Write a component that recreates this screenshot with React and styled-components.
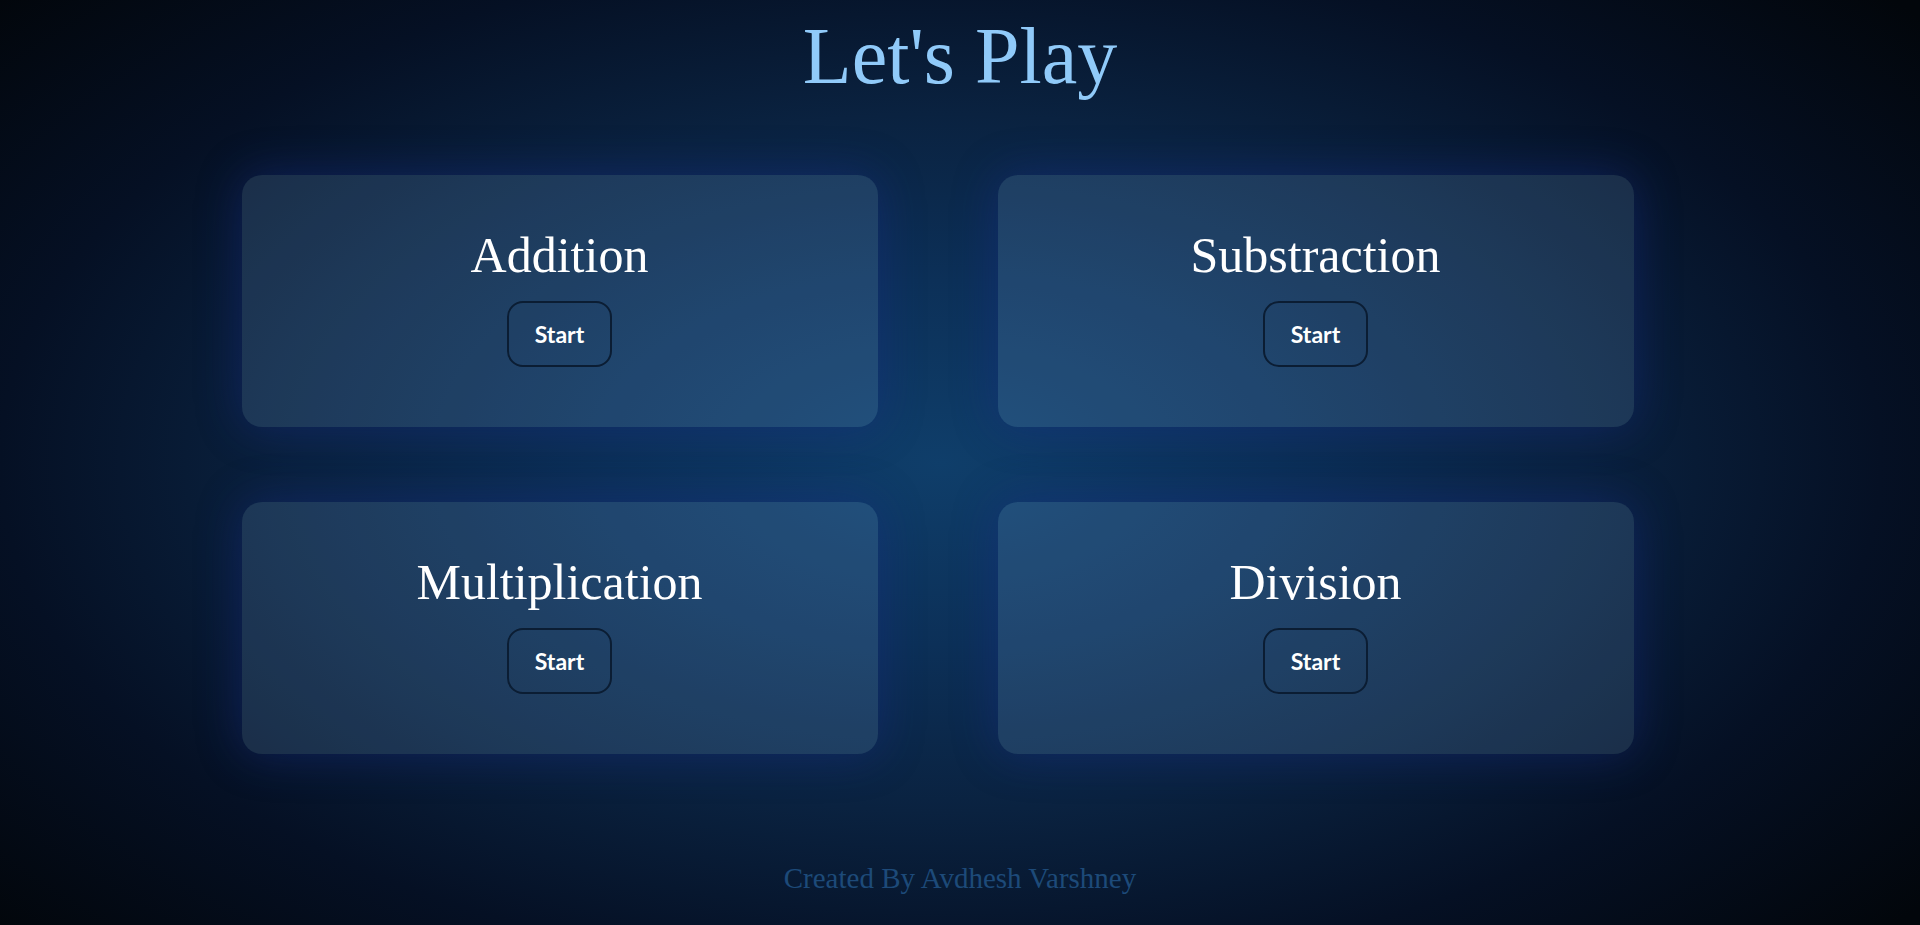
import React from 'react';
import styled, { createGlobalStyle } from 'styled-components';

const GlobalStyle = createGlobalStyle`
    * { box-sizing: border-box; }
    body {
        margin: 0;
        background: #02060b;
        font-family: "Liberation Serif", serif;
    }
`;

const Page = styled.div`
    height: 100vh;
    overflow: hidden;
    display: flex;
    flex-direction: column;
    align-items: center;
    background: radial-gradient(ellipse 72% 82% at 49% 50%, #0f3e6a 0%, #0c3058 24%, #0a2240 46%, #051024 68%, #02060b 92%);
`;

const Title = styled.h1`
    margin: 10px 0 0;
    font-family: "Liberation Serif", serif;
    font-weight: 400;
    font-size: 80px;
    line-height: 92px;
    color: #90caf9;
`;

const Grid = styled.div`
    display: grid;
    grid-template-columns: repeat(2, 636px);
    grid-auto-rows: 252px;
    column-gap: 120px;
    row-gap: 75px;
    margin-top: 73px;
    margin-right: 45px;
`;

const Card = styled.div`
    display: flex;
    flex-direction: column;
    align-items: center;
    justify-content: center;
    gap: 17px;
    padding-bottom: 8px;
    border-radius: 20px;
    background: rgba(150, 200, 245, 0.15);
    box-shadow: 0 0 45px rgba(25, 45, 140, 0.45);
`;

const CardTitle = styled.h2`
    margin: 0;
    font-family: "Liberation Serif", serif;
    font-weight: 400;
    font-size: 50px;
    line-height: 57px;
    color: #ffffff;
`;

const StartButton = styled.button`
    padding: 16px 26px;
    border: 2px solid #0b1d33;
    border-radius: 16px;
    background: transparent;
    color: #ffffff;
    font-family: Lato, "Liberation Sans", sans-serif;
    font-weight: 700;
    font-size: 23px;
    line-height: 30px;
    cursor: pointer;
`;

const Footer = styled.p`
    margin: 108px 0 0;
    font-family: "Liberation Serif", serif;
    font-size: 29px;
    line-height: 33px;
    color: #1d4a79;
`;

const games = ['Addition', 'Substraction', 'Multiplication', 'Division'];

export default function App() {
    return (
        <Page>
            <GlobalStyle />
            <Title>Let's Play</Title>
            <Grid>
                {games.map(name => (
                    <Card key={name}>
                        <CardTitle>{name}</CardTitle>
                        <StartButton>Start</StartButton>
                    </Card>
                ))}
            </Grid>
            <Footer>Created By Avdhesh Varshney</Footer>
        </Page>
    );
}
